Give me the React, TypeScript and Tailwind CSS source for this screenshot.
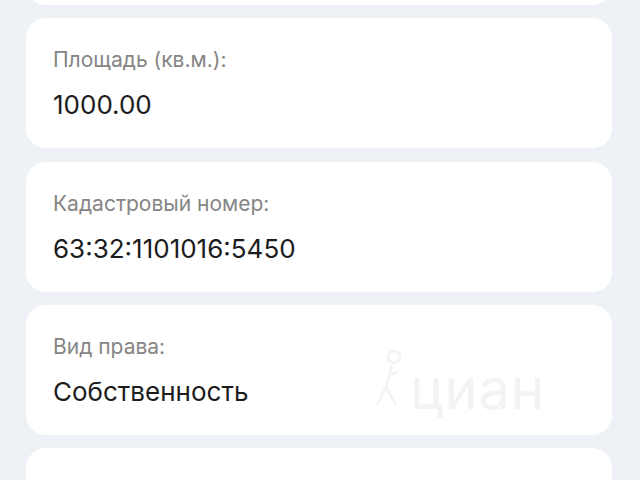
const rows = [
  { label: "", value: "" },
  { label: "Площадь (кв.м.):", value: "1000.00" },
  { label: "Кадастровый номер:", value: "63:32:1101016:5450" },
  { label: "Вид права:", value: "Собственность" },
  { label: "", value: "" },
];

function InfoCard({ label, value, watermark }: { label: string; value: string; watermark?: boolean }) {
  return (
    <div className="relative h-[130px] shrink-0 rounded-[20px] bg-white px-[27px] pt-[29px]">
      <p className="text-[21px] leading-[26px] text-[#858585]">{label}</p>
      <p className="mt-[16px] text-[26px] leading-[32px] text-[#1c1c1c]">{value}</p>
      {watermark && (
        // faint cian watermark over the card
        <div className="pointer-events-none absolute left-[346px] top-[40px] flex items-end gap-1 text-[#f3f3f3]">
          <svg width="34" height="66" viewBox="0 0 34 66" fill="none" stroke="currentColor" strokeWidth={2.5}>
            <circle cx="22" cy="12" r="6" />
            <path d="M20 20 L14 42 L5 60 M14 42 L24 60 M16 30 L27 27" />
          </svg>
          <span className="mb-[-6px] text-[56px] leading-none tracking-[1px]">циан</span>
        </div>
      )}
    </div>
  );
}

export default function App() {
  return (
    <div className="h-[480px] w-[640px] overflow-hidden bg-[#eef1f5] font-[Inter,'Noto_Sans',sans-serif]">
      <div className="mt-[-125px] flex flex-col gap-[13.33px] pl-[26px] pr-[28px]">
        {rows.map((r, i) => (
          <InfoCard key={i} label={r.label} value={r.value} watermark={i === 3} />
        ))}
      </div>
    </div>
  );
}
